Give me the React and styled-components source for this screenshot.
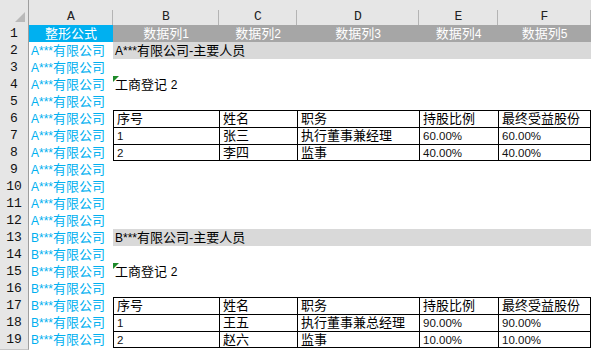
import React from "react";
import styled, { createGlobalStyle } from "styled-components";

const Global = createGlobalStyle`
    html, body {
        margin: 0;
        padding: 0;
        background: #fff;
        overflow: hidden;
    }
`;

const COLS = "29px 84px 106px 78px 122px 79px 93px";
const TEXT_FONT = `"Liberation Sans", "Noto Sans CJK SC", sans-serif`;
const HEAD_FONT = `"Liberation Mono", "Noto Sans CJK SC", monospace`;

const Sheet = styled.div`
    width: 591px;
    height: 350px;
    overflow: hidden;
    display: flex;
    flex-direction: column;
    font-family: ${TEXT_FONT};
    font-size: 13px;
`;

const Row = styled.div`
    display: grid;
    grid-template-columns: ${COLS};
    height: ${(p) => p.$h || 17}px;
    flex-shrink: 0;
`;

const Corner = styled.div`
    background: #e6e6e6;
    border-right: 1px solid #9e9e9e;
    border-bottom: 1px solid #b4b4b4;
    box-sizing: border-box;
    display: flex;
    align-items: flex-end;
    justify-content: flex-end;
    padding: 0 3px 3px 0;

    span {
        width: 0;
        height: 0;
        border-left: 10px solid transparent;
        border-bottom: 10px solid #b9b9b9;
    }
`;

const ColHead = styled.div`
    background:
        linear-gradient(#b4b4b4, #b4b4b4) right bottom / 1px 15px no-repeat,
        #e6e6e6;
    border-bottom: 1px solid #b4b4b4;
    box-sizing: border-box;
    padding-top: 8px;
    text-align: center;
    line-height: 17px;
    font-family: ${HEAD_FONT};
    font-size: 13px;
    color: #222;
`;

const RowHead = styled.div`
    background: #e6e6e6;
    border-right: 1px solid #9e9e9e;
    border-bottom: 1px solid #c6c6c6;
    box-sizing: border-box;
    text-align: center;
    line-height: 17px;
    font-family: ${HEAD_FONT};
    font-size: 13px;
    color: #111;
`;

const Cell = styled.div`
    position: relative;
    box-sizing: border-box;
    height: 17px;
    line-height: 17px;
    padding-left: ${(p) => (p.$center ? 0 : 2)}px;
    text-align: ${(p) => (p.$center ? "center" : "left")};
    white-space: nowrap;
    overflow: hidden;
    color: ${(p) => p.$color || "#000"};
    background: ${(p) => p.$bg || "transparent"};
    grid-column: ${(p) => p.$span || "auto"};
`;

const TableCell = styled(Cell)`
    border-left: 1px solid #000;
    border-top: 1px solid #000;
    border-right: ${(p) => (p.$lastCol ? "1px solid #000" : "none")};
    border-bottom: ${(p) => (p.$lastRow ? "1px solid #000" : "none")};
    line-height: 15px;
    padding-left: 3px;
`;

const Lat = styled.span`
    font-size: 12px;
`;

const Num = styled.span`
    font-size: 11.5px;
    color: #111;
`;

const ErrorMark = styled.span`
    position: absolute;
    left: 0;
    top: 0;
    width: 0;
    height: 0;
    border-top: 6px solid #1e8a2a;
    border-right: 6px solid transparent;
`;

const letters = ["A", "B", "C", "D", "E", "F"];

const tables = {
    A: [
        ["1", "张三", "执行董事兼经理", "60.00%", "60.00%"],
        ["2", "李四", "监事", "40.00%", "40.00%"],
    ],
    B: [
        ["1", "王五", "执行董事兼总经理", "90.00%", "90.00%"],
        ["2", "赵六", "监事", "10.00%", "10.00%"],
    ],
};

const tableHead = ["序号", "姓名", "职务", "持股比例", "最终受益股份"];

const Company = ({ k }) => (
    <>
        <Lat>{k}***</Lat>有限公司
    </>
);

const CellText = ({ text }) => {
    if (/^[0-9.%]+$/.test(text)) return <Num>{text}</Num>;
    return text;
};

const TableRow = ({ cells, lastRow }) =>
    cells.map((c, i) => (
        <TableCell key={i} $lastCol={i === 4} $lastRow={lastRow}>
            <CellText text={c} />
        </TableCell>
    ));

const Block = ({ k, start }) => {
    const rows = [];
    const push = (n, content) =>
        rows.push(
            <Row key={n}>
                <RowHead>{n}</RowHead>
                <Cell $color="#00b0f0">
                    <Company k={k} />
                </Cell>
                {content}
            </Row>
        );

    push(
        start,
        <Cell $bg="#d9d9d9" $span="3 / span 5">
            <Lat>{k}***</Lat>有限公司-主要人员
        </Cell>
    );
    push(start + 1, null);
    push(
        start + 2,
        <Cell>
            <ErrorMark />
            工商登记 <Lat>2</Lat>
        </Cell>
    );
    push(start + 3, null);
    push(start + 4, <TableRow cells={tableHead} />);
    tables[k].forEach((r, i) =>
        push(start + 5 + i, <TableRow cells={r} lastRow={i === tables[k].length - 1} />)
    );
    return rows;
};

const App = () => (
    <Sheet>
        <Global />
        <Row $h={25}>
            <Corner>
                <span />
            </Corner>
            {letters.map((l) => (
                <ColHead key={l}>{l}</ColHead>
            ))}
        </Row>
        <Row>
            <RowHead>1</RowHead>
            <Cell $center $bg="#00b0f0" $color="#fff">
                整形公式
            </Cell>
            {[1, 2, 3, 4, 5].map((n) => (
                <Cell key={n} $center $bg="#a6a6a6" $color="#fff">
                    数据列<Lat>{n}</Lat>
                </Cell>
            ))}
        </Row>
        <Block k="A" start={2} />
        {[9, 10, 11, 12].map((n) => (
            <Row key={n}>
                <RowHead>{n}</RowHead>
                <Cell $color="#00b0f0">
                    <Company k="A" />
                </Cell>
            </Row>
        ))}
        <Block k="B" start={13} />
        <Row $h={2}>
            <RowHead />
        </Row>
    </Sheet>
);

export default App;
